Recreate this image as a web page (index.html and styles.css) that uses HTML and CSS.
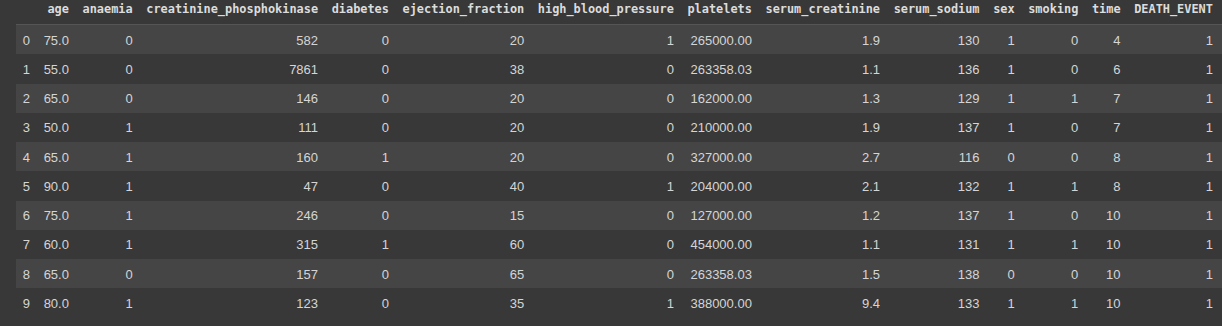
FILE: index.html
```html
<!DOCTYPE html>
<html>
<head>
<meta charset="utf-8">
<link rel="stylesheet" href="styles.css">
</head>
<body>
<div class="output">
<table class="dataframe">
<thead>
<tr><th class="idx"></th><th>age</th><th>anaemia</th><th>creatinine_phosphokinase</th><th>diabetes</th><th>ejection_fraction</th><th>high_blood_pressure</th><th>platelets</th><th>serum_creatinine</th><th>serum_sodium</th><th>sex</th><th>smoking</th><th>time</th><th>DEATH_EVENT</th></tr>
</thead>
<tbody>
<tr><th>0</th><td>75.0</td><td>0</td><td>582</td><td>0</td><td>20</td><td>1</td><td>265000.00</td><td>1.9</td><td>130</td><td>1</td><td>0</td><td>4</td><td>1</td></tr>
<tr><th>1</th><td>55.0</td><td>0</td><td>7861</td><td>0</td><td>38</td><td>0</td><td>263358.03</td><td>1.1</td><td>136</td><td>1</td><td>0</td><td>6</td><td>1</td></tr>
<tr><th>2</th><td>65.0</td><td>0</td><td>146</td><td>0</td><td>20</td><td>0</td><td>162000.00</td><td>1.3</td><td>129</td><td>1</td><td>1</td><td>7</td><td>1</td></tr>
<tr><th>3</th><td>50.0</td><td>1</td><td>111</td><td>0</td><td>20</td><td>0</td><td>210000.00</td><td>1.9</td><td>137</td><td>1</td><td>0</td><td>7</td><td>1</td></tr>
<tr><th>4</th><td>65.0</td><td>1</td><td>160</td><td>1</td><td>20</td><td>0</td><td>327000.00</td><td>2.7</td><td>116</td><td>0</td><td>0</td><td>8</td><td>1</td></tr>
<tr><th>5</th><td>90.0</td><td>1</td><td>47</td><td>0</td><td>40</td><td>1</td><td>204000.00</td><td>2.1</td><td>132</td><td>1</td><td>1</td><td>8</td><td>1</td></tr>
<tr><th>6</th><td>75.0</td><td>1</td><td>246</td><td>0</td><td>15</td><td>0</td><td>127000.00</td><td>1.2</td><td>137</td><td>1</td><td>0</td><td>10</td><td>1</td></tr>
<tr><th>7</th><td>60.0</td><td>1</td><td>315</td><td>1</td><td>60</td><td>0</td><td>454000.00</td><td>1.1</td><td>131</td><td>1</td><td>1</td><td>10</td><td>1</td></tr>
<tr><th>8</th><td>65.0</td><td>0</td><td>157</td><td>0</td><td>65</td><td>0</td><td>263358.03</td><td>1.5</td><td>138</td><td>0</td><td>0</td><td>10</td><td>1</td></tr>
<tr><th>9</th><td>80.0</td><td>1</td><td>123</td><td>0</td><td>35</td><td>1</td><td>388000.00</td><td>9.4</td><td>133</td><td>1</td><td>1</td><td>10</td><td>1</td></tr>
</tbody>
</table>
</div>
</body>
</html>
```
FILE: styles.css
```css
html, body {
  margin: 0;
  padding: 0;
  background: #383838;
}
.output {
  padding: 0 0 0 16px;
  overflow: hidden;
}
.dataframe {
  border-collapse: collapse;
  border-spacing: 0;
  color: #d5d5d5;
  font-family: "Liberation Sans", Arial, sans-serif;
  font-size: 13px;
  white-space: nowrap;
}
.dataframe thead th {
  font-family: "DejaVu Sans Mono", monospace;
  font-size: 11.9px;
  font-weight: bold;
  color: #dcdcdc;
  text-align: right;
  line-height: 14px;
  padding: 2px 6.8px 8px;
  border-bottom: 1px solid #555555;
}
.dataframe tbody td,
.dataframe tbody th {
  line-height: 15px;
  padding: 7.5px 6.8px 6.75px;
  text-align: right;
  font-weight: normal;
}
.dataframe tbody th {
  text-align: left;
}
.dataframe tr > :last-child {
  padding-right: 12px;
}
.dataframe tbody tr:nth-child(odd) {
  background: #454545;
}
```
